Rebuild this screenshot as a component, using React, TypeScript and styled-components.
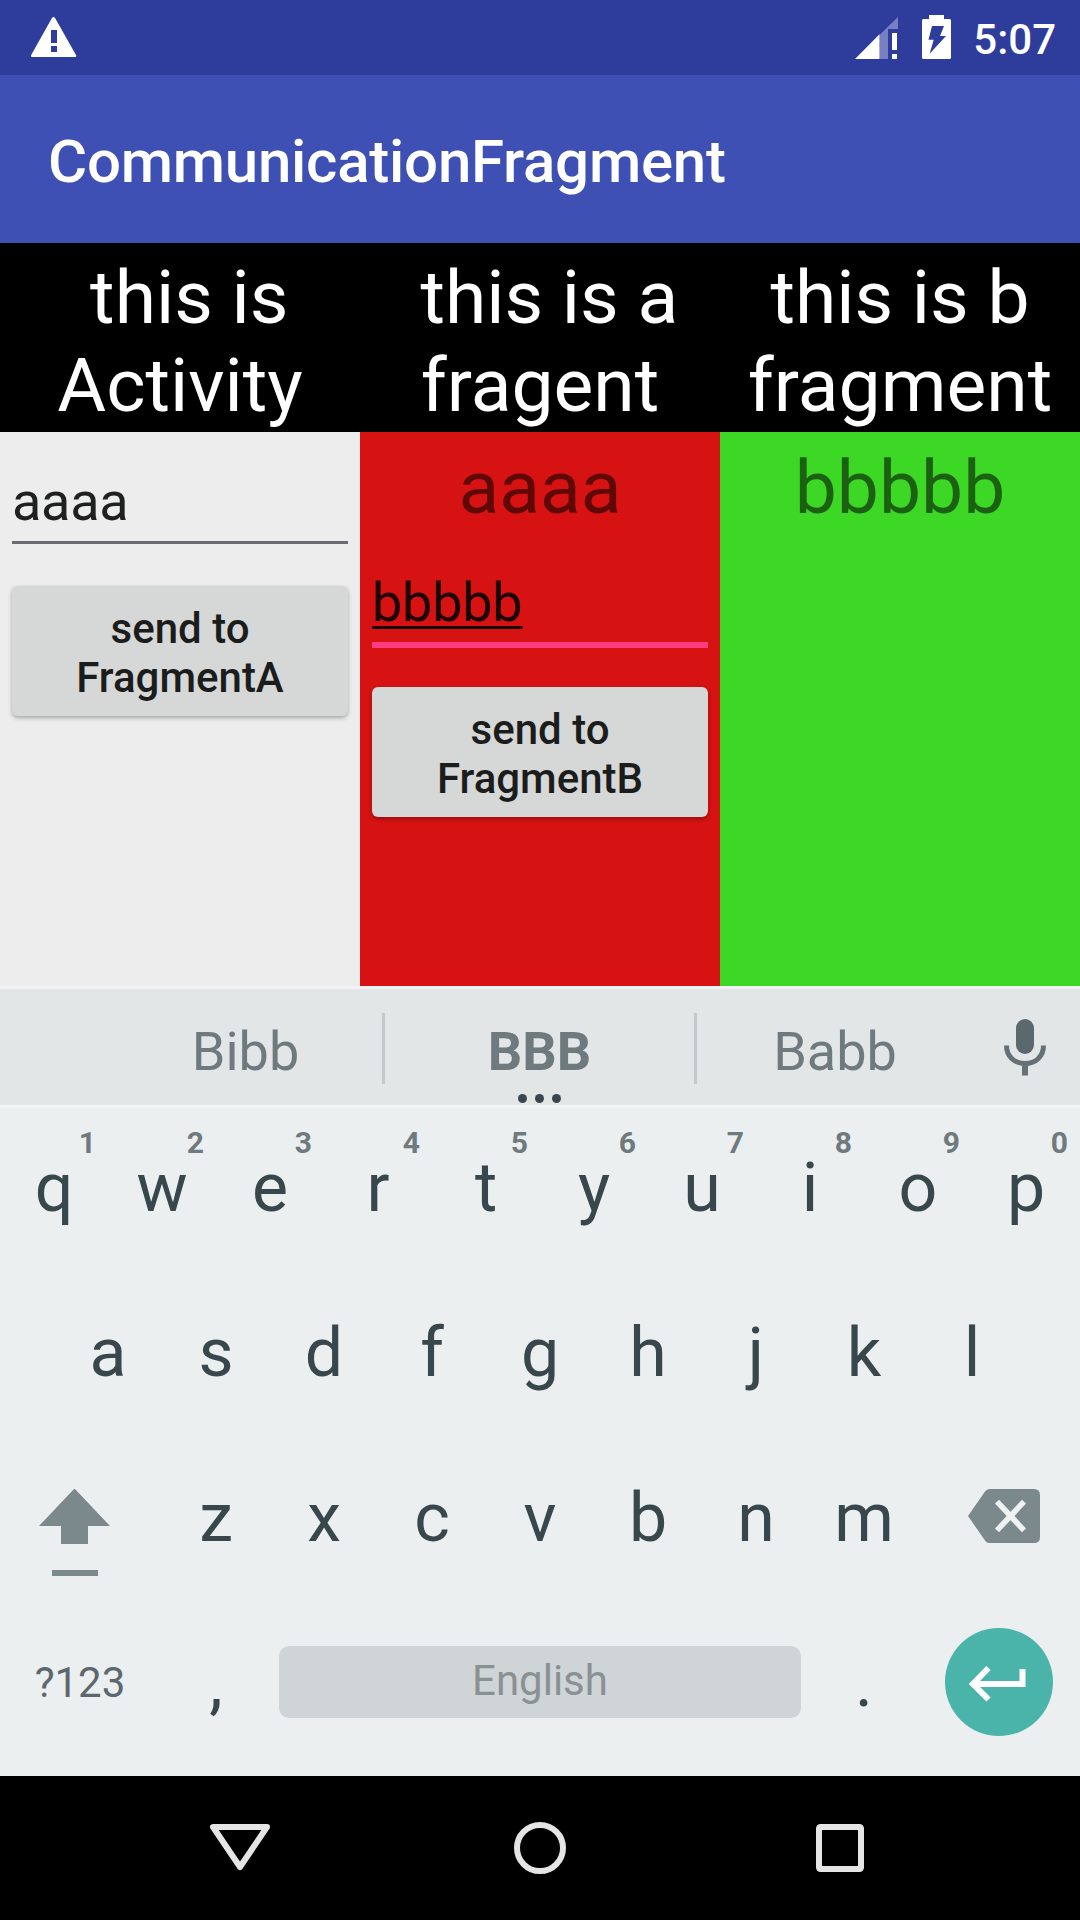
import React from 'react';
import styled, { createGlobalStyle } from 'styled-components';

const GlobalStyle = createGlobalStyle`
  * { box-sizing: border-box; }
  body { margin: 0; background: #000; font-family: Roboto, 'Noto Sans', sans-serif; }
  svg { display: block; flex: none; }
`;

const Screen = styled.div`
  width: 1080px;
  height: 1920px;
  display: flex;
  flex-direction: column;
  overflow: hidden;
`;

const StatusBar = styled.header`
  height: 75px;
  flex: none;
  display: flex;
  align-items: flex-start;
  padding: 15px 24px 0 31px;
  background: #2e3c9c;
  color: #fff;
`;

const StatusIcons = styled.div`
  margin-left: auto;
  display: flex;
  gap: 24px;
`;

const Clock = styled.span`
  margin-left: 22px;
  padding-top: 1px;
  font-size: 42px;
  font-weight: 500;
  line-height: 48px;
`;

const AppBar = styled.div`
  height: 168px;
  flex: none;
  display: flex;
  padding: 52px 48px 0;
  background: #3f50b4;
`;

const Title = styled.h1`
  margin: 0;
  font-size: 60px;
  font-weight: 500;
  line-height: 70px;
  letter-spacing: -0.24px;
  color: #fff;
`;

const Columns = styled.main`
  height: 743px;
  flex: none;
  display: grid;
  grid-template-columns: repeat(3, 360px);
`;

const Column = styled.section`
  display: flex;
  flex-direction: column;
`;

const ColumnHeader = styled.h2`
  margin: 0;
  height: 189px;
  padding-top: 10px;
  background: #000;
  color: #fff;
  font-size: 75px;
  font-weight: 400;
  line-height: 88px;
  text-align: center;
`;

const Panel = styled.div<{ $color: string }>`
  flex: 1;
  display: flex;
  flex-direction: column;
  padding: 0 12px;
  background: ${p => p.$color};
`;

const Message = styled.p`
  height: 101px;
  margin: 0;
  padding-top: 11px;
  font-size: 75px;
  line-height: 88px;
  text-align: center;
  color: rgba(0, 0, 0, 0.55);
`;

const Field = styled.div<{ $focused?: boolean }>`
  height: ${p => (p.$focused ? 115 : 112)}px;
  margin-bottom: ${p => (p.$focused ? 39 : 42)}px;
  padding-top: 38px;
  border-bottom: ${p => (p.$focused ? '6px solid #ff3c80' : '3px solid #6b6b74')};
  font-size: 54px;
  line-height: 63px;
  letter-spacing: -0.25px;
  color: ${p => (p.$focused ? '#1c0202' : '#1f2020')};
`;

const Composing = styled.span`
  text-decoration: underline;
  text-decoration-thickness: 3px;
  text-underline-offset: 5px;
  text-decoration-skip-ink: none;
`;

const SendButton = styled.button`
  height: 130px;
  padding: 4px 0 0;
  border: 0;
  border-radius: 6px;
  background: #d6d7d7;
  box-shadow: 0 2px 4px rgba(0, 0, 0, 0.3);
  font: 500 42px/49px Roboto, sans-serif;
  text-align: center;
  color: #1b1c1c;
  display: block;
`;

const Suggestions = styled.div`
  height: 122px;
  flex: none;
  display: flex;
  border-top: 3px solid #f1f3f4;
  border-bottom: 3px solid #f1f4f5;
  padding-left: 109px;
  background: #e2e6e7;
`;

const Suggestion = styled.div<{ $width: number; $bold?: boolean }>`
  width: ${p => p.$width}px;
  display: flex;
  flex-direction: column;
  align-items: center;
  padding-top: 31px;
  font-size: 54px;
  line-height: 63px;
  font-weight: ${p => (p.$bold ? 700 : 400)};
  color: #6f7a7e;
`;

const Divider = styled.div`
  width: 3px;
  height: 71px;
  margin-top: 24px;
  background: #c5c9cb;
`;

const MoreDots = styled.div`
  display: flex;
  gap: 8px;
  margin: 11px 1px 0 0;
  i { width: 9px; height: 9px; border-radius: 50%; background: #37474f; }
`;

const MicSlot = styled.div`
  width: 107px;
  padding: 30px 0 0 29px;
`;

const Keyboard = styled.div`
  height: 668px;
  flex: none;
  background: #ebeff0;
`;

const KeyRow = styled.div`
  height: 165px;
  display: flex;
  justify-content: center;
`;

const Key = styled.div`
  position: relative;
  width: 108px;
  padding-top: 40px;
  font-size: 68px;
  line-height: 80px;
  text-align: center;
  color: #37474c;
`;

const Hint = styled.span`
  position: absolute;
  top: 17px;
  right: 12px;
  font-size: 30px;
  font-weight: 700;
  line-height: 35px;
  color: #6f7a7e;
`;

const WideKey = styled.div<{ $align?: string }>`
  width: 162px;
  display: flex;
  justify-content: ${p => p.$align ?? 'center'};
  padding: 51px 40px 0 39px;
`;

const SymbolsKey = styled(WideKey)`
  padding: 55px 2px 0 0;
  font-size: 42px;
  line-height: 49px;
  color: #5c686d;
`;

const SpaceKey = styled.div`
  width: 522px;
  height: 72px;
  margin: 43px 9px 0;
  padding-top: 10px;
  border-radius: 10px;
  background: #cfd4d7;
  font-size: 42px;
  line-height: 49px;
  text-align: center;
  color: #8a9193;
`;

const EnterKey = styled.div`
  width: 108px;
  height: 108px;
  margin: 25px 27px 0;
  border-radius: 50%;
  background: #4ab4aa;
`;

const NavBar = styled.nav`
  height: 144px;
  flex: none;
  display: flex;
  align-items: center;
  justify-content: center;
  gap: 243px;
  background: #000;
`;

const WarningIcon = () => (
  <svg width="46" height="44" viewBox="0 0 46 44">
    <path
      fillRule="evenodd"
      fill="#fff"
      d="M20.8 3.2Q22.5 .8 24.2 3.2L45 40Q46 42 44 42H1.2Q-.8 42 .2 40ZM20 15V28H26V15ZM20 31V37H26V31Z"
    />
  </svg>
);

const SignalIcon = () => (
  <svg width="43" height="44" viewBox="0 0 43 44">
    <path fill="#7680c3" d="M24.5 20L43 2V14H33V44H24.5Z" />
    <path fill="#fff" d="M0 44L24.5 19.2V44Z" />
    <path fill="#fff" d="M37 18H42V35H37ZM37 39H42V44H37Z" />
  </svg>
);

const BatteryIcon = () => (
  <svg width="29" height="44" viewBox="0 0 29 44">
    <path
      fillRule="evenodd"
      fill="#fff"
      d="M7 0H22V4H27.5Q29 4 29 5.5V42.5Q29 44 27.500 44H1.500Q0 44 0 42.500V5.500Q0 4 1.500 4H7ZM10 11L6.500 24.700H11.700L7.600 38.700L24 21H18L22 11Z"
    />
  </svg>
);

const MicIcon = () => (
  <svg width="44" height="58" viewBox="0 0 44 58">
    <rect x="14" y="0" width="18" height="35" rx="9" fill="#5b696f" />
    <path d="M4.500 26.500C4.500 37 12 44.500 23 44.500S41.500 37 41.500 26.500" fill="none" stroke="#657177" strokeWidth="5" />
    <path d="M20 44H26V56.500H20Z" fill="#657177" />
  </svg>
);

const ShiftIcon = () => (
  <svg width="72" height="90" viewBox="0 0 72 90">
    <path fill="#7b898d" d="M35.500 -.500L71 37H49V55H22V37H0ZM13 81H59V87H13Z" />
  </svg>
);

const BackspaceIcon = () => (
  <svg width="72" height="54" viewBox="0 0 72 54">
    <path
      fill="#7b898d"
      d="M21.500 0H66Q72 0 72 6V48Q72 54 66 54H21.500Q18.500 54 17 51.500L0 27L17 2.500Q18.500 0 21.500 0Z"
    />
    <path d="M29 12.700L56 41.300M56 12.700L29 41.300" stroke="#eff2f3" strokeWidth="5.600" />
  </svg>
);

const EnterIcon = () => (
  <svg width="108" height="108" viewBox="0 0 108 108">
    <path d="M77.500 41V56H28" fill="none" stroke="#fff" strokeWidth="6" />
    <path d="M43.500 40L28 56L43.500 71.500" fill="none" stroke="#fff" strokeWidth="6" />
  </svg>
);

const BackIcon = () => (
  <svg width="62" height="48" viewBox="0 0 62 48">
    <path d="M4 3H58L31 43Z" fill="none" stroke="#e5e5e5" strokeWidth="6" strokeLinejoin="round" />
  </svg>
);

const HomeIcon = () => (
  <svg width="52" height="52" viewBox="0 0 52 52">
    <circle cx="26" cy="26" r="23" fill="none" stroke="#e5e5e5" strokeWidth="6" />
  </svg>
);

const RecentsIcon = () => (
  <svg width="62" height="48" viewBox="0 0 62 48">
    <rect x="10" y="3" width="42" height="42" rx="1.500" fill="none" stroke="#e5e5e5" strokeWidth="6" />
  </svg>
);

const Keys = ({ letters, hints }: { letters: string; hints?: string }) => (
  <>
    {letters.split('').map((letter, i) => (
      <Key key={letter}>
        {letter}
        {hints && <Hint>{hints[i]}</Hint>}
      </Key>
    ))}
  </>
);

export default function App() {
  return (
    <Screen>
      <GlobalStyle />
      <StatusBar>
        <WarningIcon />
        <StatusIcons>
          <SignalIcon />
          <BatteryIcon />
        </StatusIcons>
        <Clock>5:07</Clock>
      </StatusBar>
      <AppBar>
        <Title>CommunicationFragment</Title>
      </AppBar>
      <Columns>
        <Column>
          <ColumnHeader>&nbsp;this is<br />Activity</ColumnHeader>
          <Panel $color="#ededed">
            <Field>aaaa</Field>
            <SendButton>send to<br />FragmentA</SendButton>
          </Panel>
        </Column>
        <Column>
          <ColumnHeader>&nbsp;this is a<br />fragent</ColumnHeader>
          <Panel $color="#d61212">
            <Message>aaaa</Message>
            <Field $focused><Composing>bbbbb</Composing></Field>
            <SendButton>send to<br />FragmentB</SendButton>
          </Panel>
        </Column>
        <Column>
          <ColumnHeader>this is b<br />fragment</ColumnHeader>
          <Panel $color="#3dd826">
            <Message>bbbbb</Message>
          </Panel>
        </Column>
      </Columns>
      <Suggestions>
        <Suggestion $width={273}>Bibb</Suggestion>
        <Divider />
        <Suggestion $width={309} $bold>
          BBB
          <MoreDots><i /><i /><i /></MoreDots>
        </Suggestion>
        <Divider />
        <Suggestion $width={276}>Babb</Suggestion>
        <MicSlot><MicIcon /></MicSlot>
      </Suggestions>
      <Keyboard>
        <KeyRow><Keys letters="qwertyuiop" hints="1234567890" /></KeyRow>
        <KeyRow><Keys letters="asdfghjkl" /></KeyRow>
        <KeyRow>
          <WideKey $align="flex-start"><ShiftIcon /></WideKey>
          <Keys letters="zxcvbnm" />
          <WideKey $align="flex-end"><BackspaceIcon /></WideKey>
        </KeyRow>
        <KeyRow>
          <SymbolsKey>?123</SymbolsKey>
          <Key>,</Key>
          <SpaceKey>English</SpaceKey>
          <Key>.</Key>
          <EnterKey><EnterIcon /></EnterKey>
        </KeyRow>
      </Keyboard>
      <NavBar>
        <BackIcon />
        <HomeIcon />
        <RecentsIcon />
      </NavBar>
    </Screen>
  );
}
